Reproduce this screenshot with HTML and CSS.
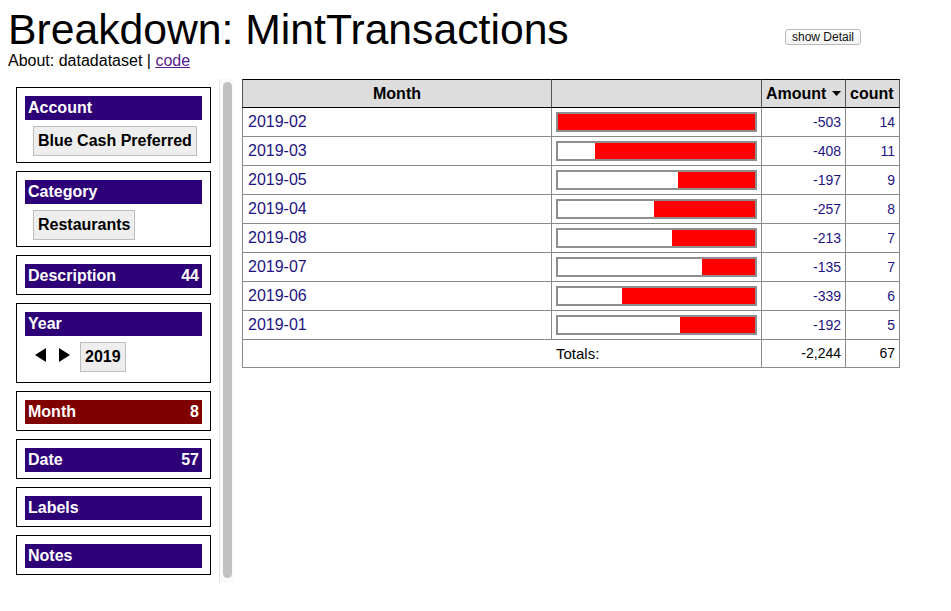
FILE: index.html
```html
<!DOCTYPE html>
<html>
<head>
<meta charset="utf-8">
<title>Breakdown: MintTransactions</title>
<link rel="stylesheet" href="styles.css">
</head>
<body>
<div class="top">
  <div class="titles">
    <h1 class="title">Breakdown: MintTransactions</h1>
    <div class="about">About: datadataset | <a class="code-link" href="#">code</a></div>
  </div>
  <button class="detail-btn">show Detail</button>
</div>
<div class="main">
  <div class="sidebar">
    <div class="facets">
      <div class="facet">
        <div class="facet-head"><span>Account</span></div>
        <div class="chip-row"><span class="chip">Blue Cash Preferred</span></div>
      </div>
      <div class="facet">
        <div class="facet-head"><span>Category</span></div>
        <div class="chip-row"><span class="chip">Restaurants</span></div>
      </div>
      <div class="facet">
        <div class="facet-head"><span>Description</span><span>44</span></div>
      </div>
      <div class="facet">
        <div class="facet-head"><span>Year</span></div>
        <div class="year-row">
          <svg class="arrow" width="11" height="14" viewBox="0 0 11 14"><polygon points="11,0 11,14 0,7" fill="#000"/></svg>
          <svg class="arrow arrow-right" width="11" height="14" viewBox="0 0 11 14"><polygon points="0,0 0,14 11,7" fill="#000"/></svg>
          <span class="chip">2019</span>
        </div>
      </div>
      <div class="facet">
        <div class="facet-head facet-head-active"><span>Month</span><span>8</span></div>
      </div>
      <div class="facet">
        <div class="facet-head"><span>Date</span><span>57</span></div>
      </div>
      <div class="facet">
        <div class="facet-head"><span>Labels</span></div>
      </div>
      <div class="facet">
        <div class="facet-head"><span>Notes</span></div>
      </div>
    </div>
    <div class="scroll-track"><div class="scroll-thumb"></div></div>
  </div>
  <table class="breakdown">
    <thead>
      <tr>
        <th class="th-month">Month</th>
        <th class="th-bar"></th>
        <th class="th-amount">Amount <svg class="sort" width="9" height="5" viewBox="0 0 9 5"><polygon points="0,0 9,0 4.5,5" fill="#000"/></svg></th>
        <th class="th-count">count</th>
      </tr>
    </thead>
    <tbody>
      <tr><td class="c-month">2019-02</td><td class="c-bar"><div class="bar"><div class="fill" style="width:100%"></div></div></td><td class="c-num">-503</td><td class="c-num">14</td></tr>
      <tr><td class="c-month">2019-03</td><td class="c-bar"><div class="bar"><div class="fill" style="width:81.1%"></div></div></td><td class="c-num">-408</td><td class="c-num">11</td></tr>
      <tr><td class="c-month">2019-05</td><td class="c-bar"><div class="bar"><div class="fill" style="width:39.2%"></div></div></td><td class="c-num">-197</td><td class="c-num">9</td></tr>
      <tr><td class="c-month">2019-04</td><td class="c-bar"><div class="bar"><div class="fill" style="width:51.1%"></div></div></td><td class="c-num">-257</td><td class="c-num">8</td></tr>
      <tr><td class="c-month">2019-08</td><td class="c-bar"><div class="bar"><div class="fill" style="width:42.3%"></div></div></td><td class="c-num">-213</td><td class="c-num">7</td></tr>
      <tr><td class="c-month">2019-07</td><td class="c-bar"><div class="bar"><div class="fill" style="width:26.8%"></div></div></td><td class="c-num">-135</td><td class="c-num">7</td></tr>
      <tr><td class="c-month">2019-06</td><td class="c-bar"><div class="bar"><div class="fill" style="width:67.4%"></div></div></td><td class="c-num">-339</td><td class="c-num">6</td></tr>
      <tr><td class="c-month">2019-01</td><td class="c-bar"><div class="bar"><div class="fill" style="width:38.2%"></div></div></td><td class="c-num">-192</td><td class="c-num">5</td></tr>
      <tr class="totals"><td class="t-empty"></td><td class="t-label">Totals:</td><td class="t-num">-2,244</td><td class="t-num">67</td></tr>
    </tbody>
  </table>
</div>
</body>
</html>
```
FILE: styles.css
```css
html, body {
  margin: 0;
  padding: 0;
  background: #fff;
}
body {
  padding: 6px 8px 0 8px;
  font-family: "Liberation Sans", Arial, Helvetica, sans-serif;
  color: #000;
}
.top {
  display: flex;
  align-items: flex-start;
  width: 853px;
}
.titles {
  display: flex;
  flex-direction: column;
}
.title {
  margin: 0;
  font-size: 42.7px;
  line-height: 46px;
  font-weight: normal;
}
.about {
  font-size: 16px;
  line-height: 18px;
}
.code-link {
  color: #551a8b;
  text-decoration: underline;
}
.detail-btn {
  margin-left: auto;
  margin-top: 23px;
  height: 16px;
  padding: 0 6px;
  border: 1px solid #b9b9b9;
  border-radius: 3px;
  background: linear-gradient(#ffffff, #f3f3f3);
  font-family: "Liberation Sans", Arial, sans-serif;
  font-size: 12px;
  line-height: 14px;
  color: #111;
}
.main {
  display: flex;
  align-items: flex-start;
  gap: 8px;
  margin-top: 9px;
}
.sidebar {
  display: flex;
  height: 504px;
  overflow: hidden;
}
.facets {
  width: 195px;
  padding: 8px 8px 0 8px;
  display: flex;
  flex-direction: column;
  gap: 8px;
}
.facet {
  border: 1px solid #000;
  padding: 8px 8px 6px 8px;
}
.facet-head {
  height: 24px;
  line-height: 24px;
  background: #2e0078;
  color: #fff;
  font-weight: bold;
  font-size: 16px;
  padding: 0 3px;
  display: flex;
  justify-content: space-between;
}
.facet-head-active {
  background: #800000;
}
.chip-row {
  margin-top: 6px;
  padding-left: 8px;
  display: flex;
}
.chip {
  display: inline-block;
  box-sizing: border-box;
  height: 30px;
  line-height: 28px;
  padding: 0 4px;
  border: 1px solid #bdbdbd;
  background: #eeeeee;
  font-weight: bold;
  font-size: 16px;
}
.year-row {
  margin-top: 6px;
  height: 34px;
  padding-left: 10px;
  display: flex;
  align-items: flex-start;
}
.arrow {
  margin-top: 6px;
}
.arrow-right {
  margin-left: 13px;
  margin-right: 10px;
}
.scroll-track {
  width: 15px;
  height: 504px;
  border-left: 1px solid #e6e6e6;
  background: #fafafa;
  display: flex;
  justify-content: center;
  padding-top: 3px;
  box-sizing: border-box;
}
.scroll-thumb {
  width: 9px;
  height: 496px;
  border-radius: 5px;
  background: #c1c1c1;
}

/* table */
.breakdown {
  border-collapse: separate;
  border-spacing: 0;
  table-layout: fixed;
  width: 658px;
}
.breakdown th,
.breakdown td {
  box-sizing: border-box;
  padding: 0 4px;
  border-right: 1px solid #8a8a8a;
  border-bottom: 1px solid #8a8a8a;
  vertical-align: middle;
}
.breakdown th {
  background: #dddddd;
  line-height: 27px;
  font-size: 16px;
  font-weight: bold;
  border-top: 1px solid #000;
  border-bottom-color: #000;
  border-right-color: #555;
  text-align: left;
}
.breakdown th:first-child {
  border-left: 1px solid #555;
}
.breakdown td:first-child {
  border-left: 1px solid #8a8a8a;
}
.th-month { width: 310px; }
.breakdown th.th-month { text-align: center; }
.th-bar { width: 210px; }
.th-amount { width: 84px; }
.th-count { width: 54px; }
.sort {
  margin-left: 1px;
  vertical-align: 3px;
}
.breakdown td {
  line-height: 28px;
}
.c-month {
  font-size: 16px;
  color: #1e1482;
}
.breakdown td.c-month {
  padding-left: 5px;
}
.bar {
  box-sizing: border-box;
  height: 20px;
  border: 2px solid #8e8e8e;
  background: #fff;
  display: flex;
  justify-content: flex-end;
}
.fill {
  height: 100%;
  background: #ff0000;
}
.c-num {
  text-align: right;
  font-size: 14px;
  color: #1e1482;
}
.breakdown .totals td {
  line-height: 27px;
}
.breakdown td.t-empty {
  border-right: none;
}
.t-label {
  font-size: 15px;
  text-align: left;
}
.t-num {
  text-align: right;
  font-size: 14px;
}
```
